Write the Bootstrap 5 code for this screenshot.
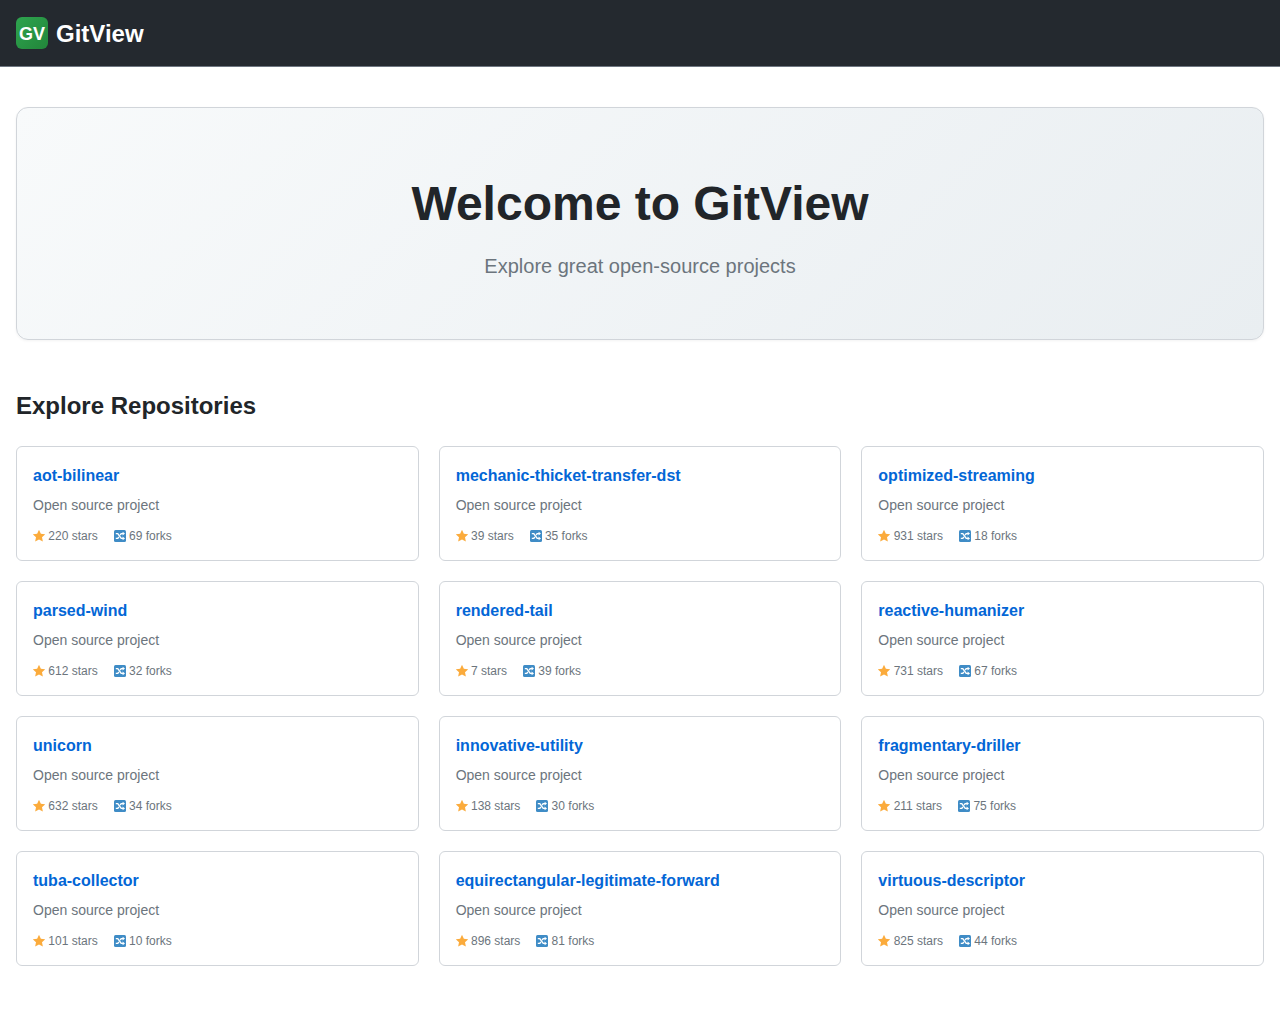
<!DOCTYPE html>
<html lang="en"><head><meta charset="utf-8"><title>GitView</title>
<link href="https://cdn.jsdelivr.net/npm/bootstrap@5.3.0/dist/css/bootstrap.min.css" rel="stylesheet">
<style>
body{font-family:"Liberation Sans",Arial,sans-serif;color:#212529;background:#fff}
.gv-nav{background:#24292f;height:67px;padding:2px 16px 0;border-bottom:1px solid #6e7681}
.gv-logo{width:32px;height:32px;border-radius:6px;background:linear-gradient(135deg,#2ea44f,#22863a);color:#fff;font-weight:700;font-size:18px;line-height:34px;margin-top:-2px}
.gv-brand{color:#fff;font-size:24px;font-weight:700;line-height:32px;text-decoration:none}
.gv-main{padding:40px 16px 0}
.gv-hero{height:233px;padding-top:6px;border:1px solid #d1d5da;border-radius:12px;background:linear-gradient(135deg,#f8fafb,#e9eef1);box-shadow:0 1px 3px rgba(0,0,0,.05)}
.gv-hero h1{font-size:48px;font-weight:700;line-height:58px;margin:0 0 21px;text-align:center}
.gv-hero p{font-size:20px;line-height:24px;color:#6c757d;margin:0}
.gv-section{font-size:24px;font-weight:700;line-height:29px;margin:51px 0 26px}
.gv-grid{display:grid;grid-template-columns:repeat(3,1fr);gap:20px}
.gv-repo{height:115px;border:1px solid #d1d5da;border-radius:6px;padding:19px 16px 0;background:#fff}
.gv-repo a{display:block;color:#0366d6;font-size:16px;font-weight:700;line-height:19px;text-decoration:none;margin-bottom:10px}
.gv-repo p{font-size:14px;line-height:20px;color:#6c757d;margin:0 0 14px}
.gv-meta{font-size:12px;line-height:14px;color:#6c757d;gap:16px}
.gv-meta span{display:inline-flex;align-items:center;gap:3.3px}
.gv-meta svg{display:block;flex:none}
</style></head><body>
<svg width="0" height="0" class="position-absolute"><defs>
<symbol id="gv-star" viewBox="0 0 12 12" overflow="visible"><path fill="#fbab3c" d="M6 -.2l1.85 3.9 4.35.5-3.2 3 .85 4.3L6 9.4l-3.85 2.1.85-4.3-3.2-3 4.35-.5z"/></symbol>
<symbol id="gv-shuffle" viewBox="0 0 12 12"><rect width="12" height="12" rx="1.5" fill="#3f8cc6"/><path fill="none" stroke="#fff" stroke-width="1.4" d="M1.8 3.6h2l3.4 4.8H9M1.8 8.4h2l1-1.4M6.2 5l1-1.4H9"/><path fill="#fff" d="M8.6 1.7l2.4 1.9-2.4 1.9zM8.6 6.5l2.4 1.9-2.4 1.9z"/></symbol>
</defs></svg>
<nav class="gv-nav d-flex align-items-center">
<a class="gv-brand d-flex align-items-center gap-2" href="#"><span class="gv-logo text-center">GV</span>GitView</a>
</nav>
<main class="gv-main">
<section class="gv-hero d-flex flex-column align-items-center justify-content-center">
<h1>Welcome to GitView</h1>
<p>Explore great open-source projects</p>
</section>
<h2 class="gv-section">Explore Repositories</h2>
<div class="gv-grid">
<div class="gv-repo"><a href="#">aot-bilinear</a><p>Open source project</p><div class="gv-meta d-flex"><span><svg width="12" height="12"><use href="#gv-star"/></svg>220 stars</span><span><svg width="12" height="12"><use href="#gv-shuffle"/></svg>69 forks</span></div></div>
<div class="gv-repo"><a href="#">mechanic-thicket-transfer-dst</a><p>Open source project</p><div class="gv-meta d-flex"><span><svg width="12" height="12"><use href="#gv-star"/></svg>39 stars</span><span><svg width="12" height="12"><use href="#gv-shuffle"/></svg>35 forks</span></div></div>
<div class="gv-repo"><a href="#">optimized-streaming</a><p>Open source project</p><div class="gv-meta d-flex"><span><svg width="12" height="12"><use href="#gv-star"/></svg>931 stars</span><span><svg width="12" height="12"><use href="#gv-shuffle"/></svg>18 forks</span></div></div>
<div class="gv-repo"><a href="#">parsed-wind</a><p>Open source project</p><div class="gv-meta d-flex"><span><svg width="12" height="12"><use href="#gv-star"/></svg>612 stars</span><span><svg width="12" height="12"><use href="#gv-shuffle"/></svg>32 forks</span></div></div>
<div class="gv-repo"><a href="#">rendered-tail</a><p>Open source project</p><div class="gv-meta d-flex"><span><svg width="12" height="12"><use href="#gv-star"/></svg>7 stars</span><span><svg width="12" height="12"><use href="#gv-shuffle"/></svg>39 forks</span></div></div>
<div class="gv-repo"><a href="#">reactive-humanizer</a><p>Open source project</p><div class="gv-meta d-flex"><span><svg width="12" height="12"><use href="#gv-star"/></svg>731 stars</span><span><svg width="12" height="12"><use href="#gv-shuffle"/></svg>67 forks</span></div></div>
<div class="gv-repo"><a href="#">unicorn</a><p>Open source project</p><div class="gv-meta d-flex"><span><svg width="12" height="12"><use href="#gv-star"/></svg>632 stars</span><span><svg width="12" height="12"><use href="#gv-shuffle"/></svg>34 forks</span></div></div>
<div class="gv-repo"><a href="#">innovative-utility</a><p>Open source project</p><div class="gv-meta d-flex"><span><svg width="12" height="12"><use href="#gv-star"/></svg>138 stars</span><span><svg width="12" height="12"><use href="#gv-shuffle"/></svg>30 forks</span></div></div>
<div class="gv-repo"><a href="#">fragmentary-driller</a><p>Open source project</p><div class="gv-meta d-flex"><span><svg width="12" height="12"><use href="#gv-star"/></svg>211 stars</span><span><svg width="12" height="12"><use href="#gv-shuffle"/></svg>75 forks</span></div></div>
<div class="gv-repo"><a href="#">tuba-collector</a><p>Open source project</p><div class="gv-meta d-flex"><span><svg width="12" height="12"><use href="#gv-star"/></svg>101 stars</span><span><svg width="12" height="12"><use href="#gv-shuffle"/></svg>10 forks</span></div></div>
<div class="gv-repo"><a href="#">equirectangular-legitimate-forward</a><p>Open source project</p><div class="gv-meta d-flex"><span><svg width="12" height="12"><use href="#gv-star"/></svg>896 stars</span><span><svg width="12" height="12"><use href="#gv-shuffle"/></svg>81 forks</span></div></div>
<div class="gv-repo"><a href="#">virtuous-descriptor</a><p>Open source project</p><div class="gv-meta d-flex"><span><svg width="12" height="12"><use href="#gv-star"/></svg>825 stars</span><span><svg width="12" height="12"><use href="#gv-shuffle"/></svg>44 forks</span></div></div>
</div>
</main>
<script src="https://cdn.jsdelivr.net/npm/bootstrap@5.3.0/dist/js/bootstrap.bundle.min.js"></script>
</body></html>
